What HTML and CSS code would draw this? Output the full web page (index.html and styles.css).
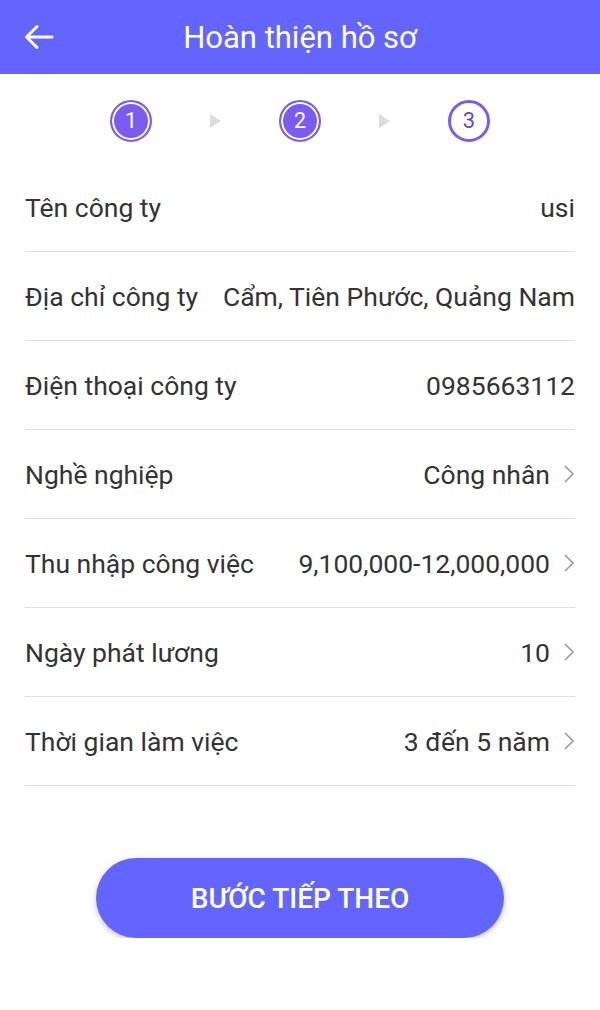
FILE: index.html
```html
<!DOCTYPE html>
<html lang="vi">
<head>
    <meta charset="UTF-8">
    <meta name="viewport" content="width=device-width, initial-scale=1.0">
    <title>Hoàn thiện hồ sơ</title>
    <link rel="stylesheet" href="styles.css">
</head>
<body>
    <div class="header">
        <a class="back" href="#">
            <svg width="30" height="26" viewBox="0 0 30 26"><path d="M28 13H3M13 2.5L2.5 13L13 23.5" fill="none" stroke="#fff" stroke-width="3" stroke-linecap="round" stroke-linejoin="round"/></svg>
        </a>
        <h1>Hoàn thiện hồ sơ</h1>
    </div>

    <div class="steps">
        <span class="step done">1</span>
        <span class="arrow"></span>
        <span class="step done">2</span>
        <span class="arrow"></span>
        <span class="step current">3</span>
    </div>

    <div class="form">
        <div class="row">
            <span class="label">Tên công ty</span>
            <span class="value"><span>usi</span></span>
        </div>
        <div class="row">
            <span class="label">Địa chỉ công ty</span>
            <span class="value"><span>Thôn 2, Tiên Cẩm, Tiên Phước, Quảng Nam</span></span>
        </div>
        <div class="row">
            <span class="label">Điện thoại công ty</span>
            <span class="value"><span>0985663112</span></span>
        </div>
        <div class="row select">
            <span class="label">Nghề nghiệp</span>
            <span class="value"><span>Công nhân</span></span>
            <svg class="chevron" width="12" height="20" viewBox="0 0 12 20"><path d="M2 2l8 8-8 8" fill="none" stroke="#9a9a9a" stroke-width="1.6"/></svg>
        </div>
        <div class="row select">
            <span class="label">Thu nhập công việc</span>
            <span class="value"><span>9,100,000-12,000,000</span></span>
            <svg class="chevron" width="12" height="20" viewBox="0 0 12 20"><path d="M2 2l8 8-8 8" fill="none" stroke="#9a9a9a" stroke-width="1.6"/></svg>
        </div>
        <div class="row select">
            <span class="label">Ngày phát lương</span>
            <span class="value"><span>10</span></span>
            <svg class="chevron" width="12" height="20" viewBox="0 0 12 20"><path d="M2 2l8 8-8 8" fill="none" stroke="#9a9a9a" stroke-width="1.6"/></svg>
        </div>
        <div class="row select">
            <span class="label">Thời gian làm việc</span>
            <span class="value"><span>3 đến 5 năm</span></span>
            <svg class="chevron" width="12" height="20" viewBox="0 0 12 20"><path d="M2 2l8 8-8 8" fill="none" stroke="#9a9a9a" stroke-width="1.6"/></svg>
        </div>
    </div>

    <div class="actions">
        <button type="button">BƯỚC TIẾP THEO</button>
    </div>
</body>
</html>
```

FILE: styles.css
```css
body {
    margin: 0;
    font-family: Roboto, "Noto Sans", Arial, sans-serif;
    background-color: #fff;
    color: #333;
}
.header {
    height: 74px;
    background-color: #6366fe;
    display: flex;
    align-items: center;
    justify-content: center;
    position: relative;
}
.header h1 {
    margin: 0;
    color: #fff;
    font-size: 31px;
    font-weight: 400;
}
.back {
    position: absolute;
    left: 24px;
    top: 24px;
    display: flex;
}
.steps {
    height: 89px;
    padding-top: 4px;
    box-sizing: border-box;
    display: flex;
    align-items: center;
    justify-content: center;
}
.step {
    width: 42px;
    height: 42px;
    box-sizing: border-box;
    border-radius: 50%;
    display: flex;
    align-items: center;
    justify-content: center;
    font-size: 22px;
}
.step.done {
    background-color: #7a5cf2;
    border: 2px solid #7a5cf2;
    box-shadow: inset 0 0 0 2px #fff;
    color: #fff;
}
.step.current {
    background-color: #fff;
    border: 3px solid #7a5cf2;
    color: #5a4fc8;
}
.arrow {
    width: 0;
    height: 0;
    border-top: 7px solid transparent;
    border-bottom: 7px solid transparent;
    border-left: 11px solid #dcdcdc;
    margin: 0 58px;
}
.form {
    padding: 0 25px;
}
.row {
    height: 88px;
    display: flex;
    align-items: center;
    border-bottom: 1px solid #e0e0e0;
    font-size: 26.5px;
}
.label {
    white-space: nowrap;
    flex-shrink: 0;
    padding-right: 25px;
}
.value {
    flex: 1;
    display: flex;
    justify-content: flex-end;
    overflow: hidden;
    white-space: nowrap;
}
.chevron {
    margin-left: 13px;
    flex-shrink: 0;
}
.actions {
    display: flex;
    justify-content: center;
    padding-top: 72px;
}
button {
    width: 408px;
    height: 80px;
    border: none;
    border-radius: 40px;
    background-color: #6366fe;
    color: #fff;
    font-family: Roboto, Arial, sans-serif;
    font-size: 28px;
    font-weight: 500;
    box-shadow: 0 2px 6px rgba(60, 60, 160, 0.3);
    cursor: pointer;
}
```
